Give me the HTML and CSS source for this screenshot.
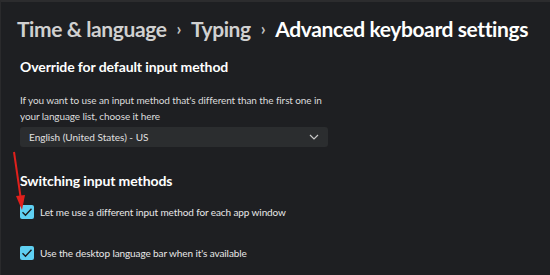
FILE: index.html
```html
<!DOCTYPE html>
<html lang="en">
<head>
  <meta charset="UTF-8" />
  <title>Advanced keyboard settings</title>
  <link rel="stylesheet" href="styles.css">
</head>
<body>
  <div class="window">
    <h1 class="crumbs">
      <span class="crumb">Time &amp; language</span>
      <span class="sep">&rsaquo;</span>
      <span class="crumb">Typing</span>
      <span class="sep">&rsaquo;</span>
      <span class="current">Advanced keyboard settings</span>
    </h1>

    <section class="group">
      <h2>Override for default input method</h2>
      <p class="desc">If you want to use an input method that's different than the first one in your language list, choose it here</p>
      <div class="select">
        <span>English (United States) - US</span>
        <svg class="chevron" width="10" height="6" viewBox="0 0 10 6"><path d="M1 1l4 4 4-4" fill="none" stroke="#c8c8c8" stroke-width="1.2"/></svg>
      </div>
    </section>

    <section class="group switching">
      <h2>Switching input methods</h2>
      <label class="check">
        <span class="box"><svg width="12" height="10" viewBox="0 0 12 10"><path d="M1.5 5.2l3 3 6-6.5" fill="none" stroke="#1b1b1b" stroke-width="1.4"/></svg></span>
        Let me use a different input method for each app window
      </label>
      <label class="check">
        <span class="box"><svg width="12" height="10" viewBox="0 0 12 10"><path d="M1.5 5.2l3 3 6-6.5" fill="none" stroke="#1b1b1b" stroke-width="1.4"/></svg></span>
        Use the desktop language bar when it's available
      </label>
    </section>

    <svg class="arrow" width="20" height="62" viewBox="0 0 20 62">
      <line x1="3" y1="2" x2="10" y2="50" stroke="#e0201c" stroke-width="2"/>
      <path d="M5 46l6 14 3-15z" fill="#e0201c"/>
    </svg>
  </div>
</body>
</html>
```
FILE: styles.css
```css
body {
  margin: 0;
  background: #1c1c1f;
  font-family: Lato, 'Noto Sans', sans-serif;
  color: #ffffff;
}

.window {
  position: relative;
  height: 275px;
  box-sizing: border-box;
  border-top: 2px solid #2c2c2e;
  border-left: 1px solid #2a2a2c;
  padding: 14px 0 0 16px;
  background: #1e1f22;
}

.crumbs {
  margin: 0;
  display: flex;
  align-items: center;
  gap: 8px;
  font-size: 21px;
  font-weight: 700;
  letter-spacing: -0.4px;
  white-space: nowrap;
}

.crumb {
  color: #d0d0d0;
}

.sep {
  color: #c0c0c0;
  font-size: 17px;
  padding: 0 2px;
}

.group {
  padding-left: 3px;
  width: 308px;
}

.group h2 {
  margin: 17px 0 0;
  font-size: 14px;
  font-weight: 700;
  letter-spacing: -0.1px;
}

.desc {
  margin: 17px 0 3px;
  font-size: 10px;
  line-height: 16px;
  letter-spacing: -0.1px;
  color: #dcdcdc;
}

.select {
  height: 20px;
  display: flex;
  align-items: center;
  justify-content: space-between;
  padding: 0 9px 0 9px;
  background: #2b2d2f;
  border-radius: 3px;
  font-size: 10px;
  color: #e0e0e0;
}

.switching h2 {
  margin-top: 25px;
}

.check {
  display: flex;
  align-items: center;
  gap: 6px;
  margin-top: 16px;
  font-size: 10px;
  letter-spacing: -0.1px;
  color: #e8e8e8;
}

.check + .check {
  margin-top: 27px;
}

.box {
  width: 14px;
  height: 14px;
  border-radius: 2px;
  background: #5fd0f2;
  display: flex;
  align-items: center;
  justify-content: center;
}

.arrow {
  position: absolute;
  left: 10px;
  top: 148px;
}
```
